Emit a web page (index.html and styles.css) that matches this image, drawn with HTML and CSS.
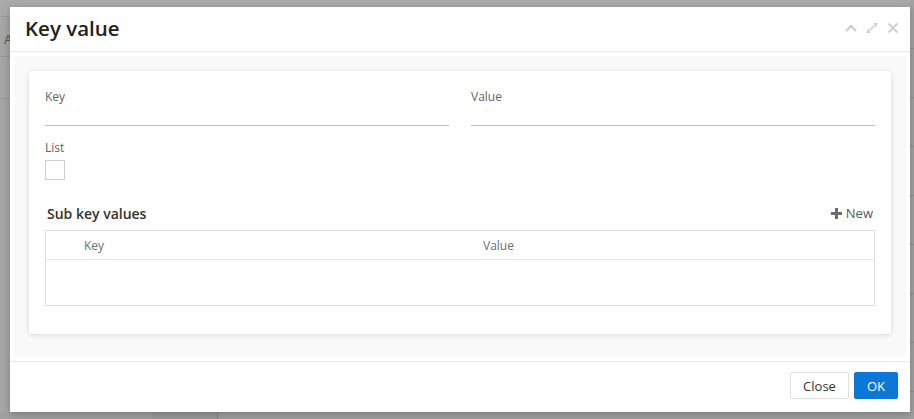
FILE: index.html
```html
<!DOCTYPE html>
<html>
<head>
<meta charset="utf-8">
<link rel="stylesheet" href="styles.css">
</head>
<body>
<div class="page">
  <div class="pg-top"></div>
  <div class="pg-row pg-a"><span class="pg-letter">A</span></div>
  <div class="pg-row pg-b"></div>
  <div class="pg-right"></div>
  <div class="pg-bottom"><div class="pg-tab"></div></div>
</div>
<div class="dialog">
  <div class="dlg-header">
    <h1 class="dlg-title">Key value</h1>
    <div class="dlg-tools">
      <svg class="tool" width="14" height="14" viewBox="0 0 14 14"><path d="M2 10 L7 5 L12 10" fill="none" stroke="#cfcfcf" stroke-width="2.4"/></svg>
      <svg class="tool" width="14" height="14" viewBox="0 0 14 14"><path d="M8 2 H12 V6 Z M2 8 V12 H6 Z" fill="#d0d0d0"/><path d="M11 3 L3 11" stroke="#d0d0d0" stroke-width="1.6"/></svg>
      <svg class="tool" width="14" height="14" viewBox="0 0 14 14"><path d="M2.5 2.5 L11.5 11.5 M11.5 2.5 L2.5 11.5" stroke="#cfcfcf" stroke-width="1.8"/></svg>
    </div>
  </div>
  <div class="dlg-body">
    <div class="card">
      <div class="fields">
        <div class="field">
          <label class="lbl">Key</label>
          <div class="input"></div>
        </div>
        <div class="field">
          <label class="lbl">Value</label>
          <div class="input"></div>
        </div>
      </div>
      <div class="list-field">
        <label class="lbl">List</label>
        <div class="checkbox"></div>
      </div>
      <div class="sub-head">
        <span class="sub-title">Sub key values</span>
        <span class="new-btn"><svg width="11" height="11" viewBox="0 0 11 11"><path d="M4 0 H7 V4 H11 V7 H7 V11 H4 V7 H0 V4 H4 Z" fill="#6b6b6b"/></svg>New</span>
      </div>
      <div class="table">
        <div class="thead">
          <div class="c-sel"></div>
          <div class="c-col">Key</div>
          <div class="c-col">Value</div>
        </div>
        <div class="tbody"></div>
      </div>
    </div>
  </div>
  <div class="dlg-footer">
    <button class="btn btn-close">Close</button>
    <button class="btn btn-ok">OK</button>
  </div>
</div>
</body>
</html>
```

FILE: styles.css
```css
* { box-sizing: border-box; }
html, body { margin: 0; padding: 0; }
body {
  width: 914px;
  height: 419px;
  overflow: hidden;
  background: #a6a6a6;
  font-family: "Open Sans", "Noto Sans", sans-serif;
  position: relative;
}
.page { position: absolute; inset: 0; }
.pg-top { height: 17px; border-bottom: 1px solid #9c9c9c; background: #aaaaaa; }
.pg-row { height: 40px; border-bottom: 1px solid #999; position: relative; }
.pg-a { height: 40px; }
.pg-letter { position: absolute; left: 4px; top: 13px; font-size: 13px; color: #555; font-family: "Open Sans", sans-serif; }
.pg-b { height: 42px; }
.pg-right {
  position: absolute; right: 0; top: 0; width: 4px; height: 419px;
  background: repeating-linear-gradient(#a2a2a2 0 48px, #8f8f8f 48px 49px);
}
.pg-bottom { position: absolute; left: 0; right: 0; bottom: 0; height: 7px; background: #a0a0a0; }
.pg-tab { position: absolute; left: 152px; width: 66px; height: 7px; background: #9a9a9a; border-right: 1px solid #888; }

.dialog {
  position: absolute;
  left: 10px; top: 7px;
  width: 900px; height: 405px;
  background: #fff;
  box-shadow: 0 2px 8px rgba(0,0,0,0.25);
  display: flex;
  flex-direction: column;
}
.dlg-header {
  height: 45px;
  border-bottom: 1px solid #e8e8e8;
  display: flex;
  align-items: center;
  justify-content: space-between;
  padding: 0 10px 0 15px;
}
.dlg-title {
  margin: 0;
  font-size: 20.5px;
  font-weight: 600;
  color: #222;
  line-height: 28px;
  margin-top: -2px;
}
.dlg-tools { display: flex; gap: 7px; align-items: center; margin-top: -2px; }
.tool { display: block; }

.dlg-body {
  margin: 4px 4px 0 4px;
  background: #f9f9f9;
  padding: 15px 15px 23px 15px;
  height: 301px;
}
.card {
  background: #fff;
  border-radius: 4px;
  box-shadow: 0 1px 5px rgba(0,0,0,0.13);
  padding: 18px 16px 28px 16px;
  height: 263px;
}
.fields { display: flex; gap: 22px; }
.field { flex: 1; }
.lbl {
  display: block;
  font-size: 12px;
  line-height: 16px;
  color: #6a625e;
}
.input { height: 21px; border-bottom: 1px solid #bdbdbd; }
.list-field { margin-top: 14px; }
.checkbox {
  margin-top: 4px;
  width: 20px; height: 20px;
  border: 1px solid #cfcfcf;
  background: #fff;
}
.sub-head {
  margin-top: 23px;
  display: flex;
  justify-content: space-between;
  align-items: center;
  height: 20px;
  padding: 0 2px;
}
.sub-title { font-size: 14px; font-weight: 600; color: #333; }
.new-btn {
  font-size: 13px;
  color: #4a5a6a;
  display: flex;
  align-items: center;
  gap: 4px;
}
.table {
  margin-top: 7px;
  border: 1px solid #dcdcdc;
  height: 76px;
}
.thead {
  display: flex;
  height: 29px;
  border-bottom: 1px solid #e6e6e6;
  align-items: center;
}
.c-sel { width: 30px; }
.c-col {
  flex: 1;
  padding-left: 8px;
  font-size: 12px;
  color: #5e7080;
}
.dlg-footer {
  margin-top: 4px;
  border-top: 1px solid #e8e8e8;
  flex: 1;
  display: flex;
  justify-content: flex-end;
  align-items: flex-start;
  gap: 5px;
  padding: 10px 12px 0 0;
}
.btn {
  font-family: "Open Sans", "Noto Sans", sans-serif;
  font-size: 13px;
  height: 27px;
  border-radius: 2px;
  padding: 0 9px;
  cursor: pointer;
}
.btn-close { background: #fff; border: 1px solid #e0e0e0; color: #333; width: 59px; }
.btn-ok { background: #0b78d8; border: 1px solid #0b78d8; color: #fff; width: 44px; }
```
